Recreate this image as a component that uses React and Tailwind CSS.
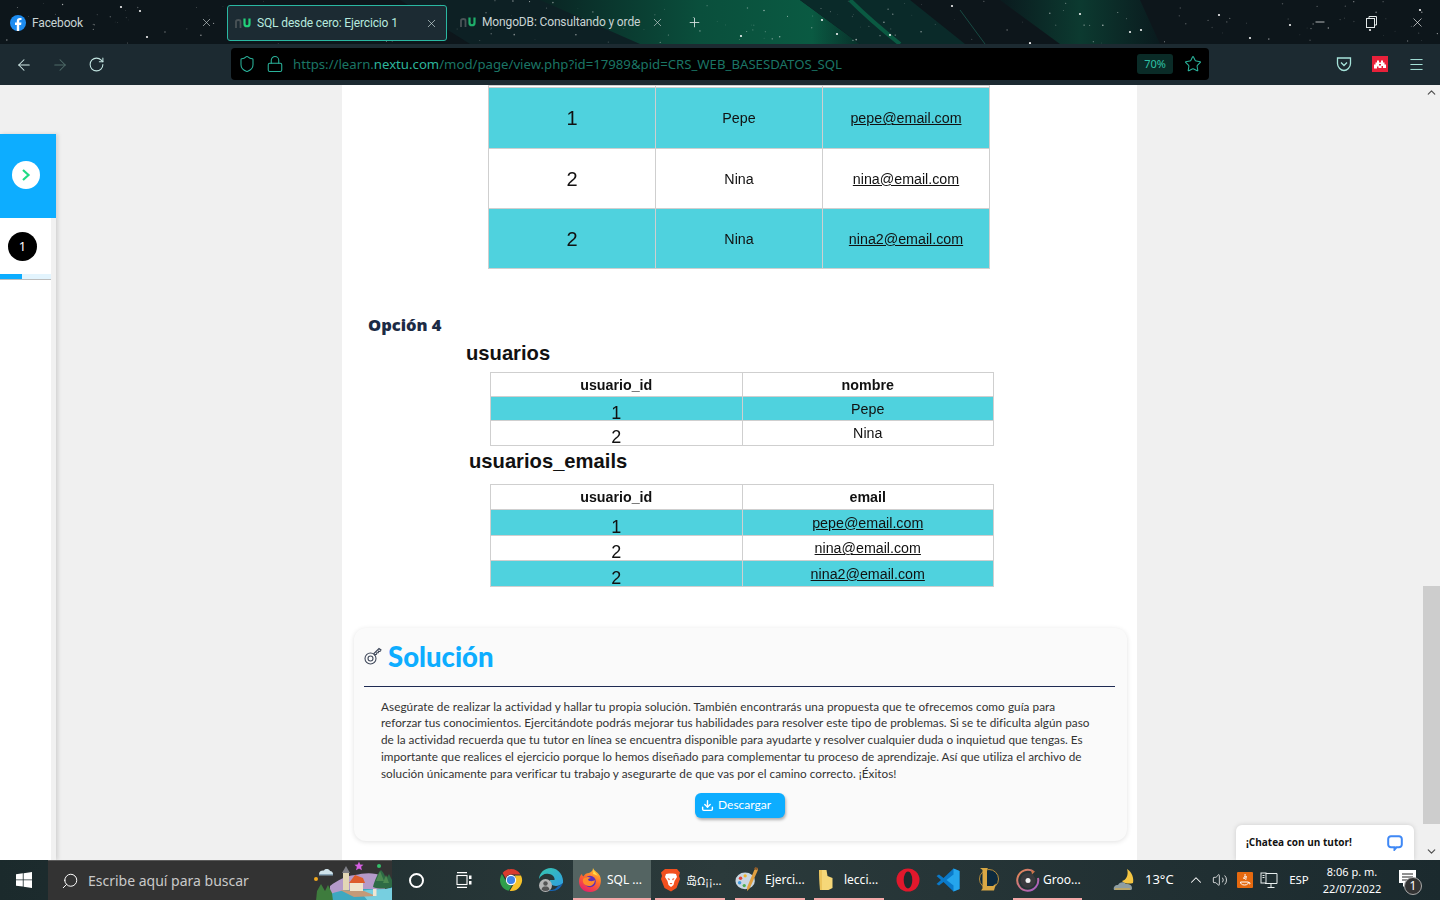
import React from "react";
import { ArrowLeft, ArrowRight, RotateCw, Shield, Lock, Star, Menu, X, Plus, Minus, Search, ChevronUp, ChevronDown, Volume2, Download } from "lucide-react";

const rnd = (i, s) => { const v = Math.sin(i * 12.9898 + s * 78.233) * 43758.5453; return v - Math.floor(v); };
const stars = Array.from({ length: 170 }, (_, i) => ({ x: rnd(i, 1) * 1440, y: rnd(i, 2) * 44, r: 0.3 + rnd(i, 3) * 0.5, o: 0.15 + rnd(i, 4) * 0.5 }));
const bright = [[121,7],[140,11],[147,37],[837,34],[1030,43],[1264,49],[1141,30],[952,6],[1219,15],[741,36],[822,20],[890,35],[1080,14],[1130,32],[1290,25],[1420,10],[1370,30],[1250,38]];

function TabsBackdrop() {
  return (
    <svg className="absolute inset-0" width="1440" height="44" viewBox="0 0 1440 44">
      <defs>
        <linearGradient id="bandA" x1="0" x2="1" y1="0" y2="0">
          <stop offset="0" stopColor="#0a2423" />
          <stop offset="0.5" stopColor="#0a4f3c" />
          <stop offset="0.85" stopColor="#0a5a42" />
          <stop offset="1" stopColor="#08302a" />
        </linearGradient>
        <linearGradient id="bandB" x1="0" x2="1" y1="0" y2="0">
          <stop offset="0" stopColor="#0a1a1e" />
          <stop offset="0.5" stopColor="#0c3a30" />
          <stop offset="1" stopColor="#0a1a1e" />
        </linearGradient>
      </defs>
      <rect width="1440" height="44" fill="#0d161b" />
      <polygon points="400,0 620,0 720,44 470,44" fill="#0d2024" />
      <polygon points="540,0 800,0 860,44 640,44" fill="url(#bandA)" />
      <polygon points="800,0 910,0 965,44 860,44" fill="#0a2a29" />
      <polygon points="1000,0 1140,0 1160,44 1060,44" fill="url(#bandB)" />
      <path d="M850 0 C870 20 885 32 900 44" stroke="#0a5a42" strokeWidth="4" fill="none" />
      <path d="M960 10 L985 44" stroke="#184a43" strokeWidth="1" fill="none" />
      {stars.map((s, i) => <circle key={i} cx={s.x} cy={s.y} r={s.r} fill="#fff" opacity={s.o} />)}
      {bright.map(([x, y], i) => <circle key={i} cx={x} cy={y} r="1.1" fill="#fff" opacity="0.95" />)}
    </svg>
  );
}

const FacebookIcon = () => (
  <svg width="16" height="16" viewBox="0 0 16 16">
    <circle cx="8" cy="8" r="8" fill="#1d8cf0" />
    <path d="M9.2 16V9.9h1.9l.35-2.3H9.2V6.2c0-.7.3-1.1 1.2-1.1h1.1V3.1c-.5-.1-1.1-.15-1.7-.15-1.8 0-3 1.1-3 3v1.65H5v2.3h1.8V16z" fill="#fff" />
  </svg>
);

const NuLogo = ({ dim }) => (
  <svg width="16" height="12" viewBox="0 0 16 12" fill="none">
    <path d="M1 11V4.5C1 2.5 5.5 2.5 5.5 4.5V11" stroke="#4a5357" strokeWidth="1.8" />
    <path d="M9.5 1.5V7C9.5 10 14.5 10 14.5 7V1.5" stroke={dim ? "#1fae6a" : "#22d07a"} strokeWidth="2.2" />
  </svg>
);

const ChromeIcon = () => (
  <svg width="24" height="24" viewBox="0 0 24 24">
    <path d="M12 1a11 11 0 0 1 9.5 5.5H12a5.5 5.5 0 0 0-5.2 3.7L3.6 4.9A11 11 0 0 1 12 1z" fill="#d93b2f" />
    <path d="M2.9 5.9 7.8 14.4A5.5 5.5 0 0 0 12.9 17.4L9.7 22.8A11 11 0 0 1 2.9 5.9z" fill="#2f9e4b" />
    <path d="M22 7.4A11 11 0 0 1 10.7 23l4.8-8.2A5.5 5.5 0 0 0 15.6 7.4z" fill="#f6c22a" />
    <circle cx="12" cy="12" r="5.2" fill="#fff" />
    <circle cx="12" cy="12" r="4.1" fill="#3f83e8" />
  </svg>
);

const EdgeIcon = () => (
  <svg width="26" height="26" viewBox="0 0 26 26">
    <defs>
      <linearGradient id="edgeA" x1="0" y1="0" x2="1" y2="1"><stop offset="0" stopColor="#36c6b0" /><stop offset="1" stopColor="#2f9fe0" /></linearGradient>
    </defs>
    <path d="M13 1C6 1 1.500 6 1 12c2-4 6-6 10-5 4 .6 6 3.500 5.500 6H12c-.5 3 2 6 6 6 2.500 0 5-1 7-3 1-6-4-15-12-15z" fill="url(#edgeA)" />
    <path d="M25 16c-2 5-6 8-11 8-2 0-3-.5-4-1 2 0 7 .5 9-3 1-1 4-2 6-4z" fill="#1565b5" />
    <circle cx="7.500" cy="18.500" r="6.500" fill="#b5b5b5" />
    <circle cx="7.500" cy="16.500" r="2.200" fill="#555" />
    <path d="M3.500 22.500c.5-2.500 2-3 4-3s3.500.5 4 3a6 6 0 0 1-8 0z" fill="#555" />
  </svg>
);

const FirefoxIcon = () => (
  <svg width="24" height="26" viewBox="0 0 24 26">
    <defs>
      <linearGradient id="ffA" x1="0.7" y1="0" x2="0.2" y2="1"><stop offset="0" stopColor="#ffc42f" /><stop offset="0.45" stopColor="#ff6a2c" /><stop offset="1" stopColor="#e5196f" /></linearGradient>
    </defs>
    <path d="M15 1c1 3 5 4 7 8 2.500 6 0 16-10 16C5 25 1 20 1 14.500 1 11 2.500 8 4 7c0 1 .5 2 1.500 2.500C6.500 7 9 6 11 6c2-1 4-2 4-5z" fill="url(#ffA)" />
    <circle cx="12" cy="14.500" r="5.800" fill="#5d2fb6" />
    <path d="M5 12c2-2 5-3 8-1-2 0-3 1-3 2 2 2 6 1 7 0-.5 4-3 6-6 6-4 0-7-3-6-7z" fill="#ff8a2a" />
    <path d="M15 1c0 3 3 5 5 8-1.500-1-4-2-5-2 1-2 0-4 0-6z" fill="#ffe04a" />
  </svg>
);

const BraveIcon = () => (
  <svg width="20" height="24" viewBox="0 0 20 24">
    <path d="M4 1h12l3 3.500-1 3.500 1 3-3.500 9L10 23.500 3.500 20 0 11l1-3-1-3.500z" fill="#f2501f" />
    <path d="M5 6l3-.5h4l3 .5 1 3-2.500 4-1 4L10 19l-2.500-2-1-4L4 9z" fill="#fff" />
    <path d="M6.500 10l2.500 1-1 1.500zM13.500 10L11 11l1 1.500zM8.500 15h3L10 16.500z" fill="#f2501f" />
  </svg>
);

const PaintIcon = () => (
  <svg width="26" height="28" viewBox="0 0 26 28">
    <ellipse cx="11" cy="15" rx="10.500" ry="9" fill="#c9d7e2" />
    <circle cx="6" cy="12" r="1.900" fill="#e0433a" />
    <circle cx="11" cy="9.500" r="1.800" fill="#f0b429" />
    <circle cx="5" cy="17" r="1.900" fill="#3f9ae0" />
    <circle cx="10" cy="20" r="1.800" fill="#4cae4f" />
    <path d="M24 1c1 .5 1 2 .5 3L16 23l-3 3 .2-4.500L21 3z" fill="#e0a040" />
    <path d="M20.500 2l3.500 1.500 1-2.500-3-1z" fill="#8b5a2b" />
  </svg>
);

const FolderDoc = () => (
  <svg width="16" height="22" viewBox="0 0 16 22">
    <path d="M1 1h7.500l1 6 5 2v10l-4 2H2z" fill="#f6d778" />
    <path d="M1 1h3v20H2z" fill="#ecc45c" />
  </svg>
);

const OperaIcon = () => (
  <svg width="24" height="24" viewBox="0 0 24 24">
    <circle cx="12" cy="12" r="11.500" fill="#e0182c" />
    <ellipse cx="12" cy="12" rx="4.300" ry="8.500" fill="#1c2b2e" />
  </svg>
);

const VSCodeIcon = () => (
  <svg width="24" height="24" viewBox="0 0 24 24">
    <path d="M17.500 0.500 7.500 10 3 6.500 0.500 8 5 12 0.500 16 3 17.500 7.500 14l10 9.500 6-2.500V3z" fill="#0a79c9" />
    <path d="M17.500 0.500 23.500 3v18l-6 2.500V0.500zM17.500 6.500 10.500 12l7 5.500z" fill="#25a5ec" fillRule="evenodd" />
  </svg>
);

const LolIcon = () => (
  <svg width="22" height="26" viewBox="0 0 22 26">
    <circle cx="12" cy="12" r="9.500" fill="#0c2a3e" stroke="#b78d3a" strokeWidth="1" />
    <path d="M3 1h8l-1 1.500V19h6l3-2.500-2 7H4l1.500-2V3z" fill="#d9a844" />
  </svg>
);

const GrooveIcon = () => (
  <svg width="24" height="24" viewBox="0 0 24 24">
    <defs>
      <linearGradient id="grA" x1="0" y1="0" x2="1" y2="1"><stop offset="0" stopColor="#e8894a" /><stop offset="1" stopColor="#a45ad0" /></linearGradient>
    </defs>
    <path d="M17 3.200A10.500 10.500 0 1 0 22 10" fill="none" stroke="url(#grA)" strokeWidth="2" />
    <circle cx="12" cy="12.500" r="7.500" fill="#3a3a3e" />
    <circle cx="12" cy="12.500" r="2.500" fill="#f2f2f2" />
    <path d="M15 1.500l4 2-3 3z" fill="#c9744a" />
  </svg>
);

const WindowsIcon = () => (
  <svg width="16" height="16" viewBox="0 0 16 16">
    <path d="M0 2.300 6.800 1.300V7.500H0zM7.600 1.200 16 0V7.500H7.600zM0 8.300H6.800V14.600L0 13.700zM7.600 8.300H16V16L7.600 14.800z" fill="#fff" />
  </svg>
);

const TaskViewIcon = () => (
  <svg width="16" height="16" viewBox="0 0 16 16" fill="none" stroke="#fff" strokeWidth="1.100">
    <path d="M1 .6H11M1 15.400H11" />
    <rect x="1" y="3.500" width="10" height="9" />
    <rect x="13" y="3.500" width="2.500" height="3.500" fill="#fff" stroke="none" />
    <rect x="13" y="9" width="2.500" height="3.500" fill="#fff" stroke="none" />
  </svg>
);

const Scenery = () => (
  <svg className="absolute right-0 top-0" width="80" height="40" viewBox="312 860 80 40">
    <path d="M330 885c8-6 15-10 25-11 8-1 16-4 30 2v24h-55z" fill="#b59ac9" />
    <path d="M318 900c12-10 30-12 48-12 8 0 18 2 26-2v14z" fill="#3ea8c0" />
    <path d="M360 890c10-2 22-1 32-3v13h-24z" fill="#77cfe0" />
    <path d="M373 886c2-8 5-14 8-17 3 3 4 6 5 9l3-5 3 6v7c-6 2-14 2-19 0z" fill="#2e6b45" />
    <path d="M376 880l4-10 4 10zM383 882l3-8 3 8z" fill="#4c8a52" />
    <path d="M316 900l1-10 4-7 4 7 3-6 4 8 1 8z" fill="#3e7c3d" />
    <path d="M340 889l24 1 12 5-22 1z" fill="#c49a78" />
    <rect x="343" y="871" width="6" height="18" fill="#e3d6b5" />
    <path d="M342 872l4-7 4 7z" fill="#7f7f86" />
    <rect x="350" y="881" width="13" height="9" fill="#f0e4cb" />
    <path d="M349 882l6-8 8 3 2 5z" fill="#dd5c2a" />
    <rect x="373" y="888" width="3.500" height="7" fill="#efe6d2" />
    <path d="M319 873c0-3 3-4 5-3.500 1-2 5-2 6 .5 2 0 3 1.500 3 3z" fill="#cfe3ea" />
    <path d="M319 873h14v1.500h-14z" fill="#8aa6b8" />
    <path d="M359 860.500l1.200 3 3.300.3-2.400 2 .8 3.400-2.900-1.800-3 1.800.9-3.400-2.500-2 3.300-.3z" fill="#d65fe2" />
    <circle cx="379" cy="865" r="2" fill="#35c06a" />
    <circle cx="316" cy="878" r="2" fill="#f2a81d" />
  </svg>
);

const WeatherIcon = () => (
  <svg width="24" height="24" viewBox="0 0 24 24">
    <path d="M15 1c5 3 7 9 6 14-3 1-9 1-11-2 4-.5 7-6 5-12z" fill="#f4c542" />
    <path d="M2 22c-1-3 1-5 4-5 1-3 6-4 8-1 3-.5 6 1 6 4 0 1-.5 2-1 2z" fill="#8e9da1" />
    <path d="M3 22h15c.5-1 0-1.500-.5-2H3z" fill="#b8a56a" />
  </svg>
);

const TrayFire = () => (
  <svg width="16" height="16" viewBox="0 0 16 16">
    <rect width="16" height="16" rx="1" fill="#e5690f" />
    <path d="M8 2c1 2-2 3-1 5 .5-1 2-2 2-3 1 2-1 3 0 4M3.500 10h8c0 1.500-1 3-4 3s-4-1.500-4-3zM12 10.500c1.500 0 1.500 1.500 0 1.500" stroke="#fff" strokeWidth="1" fill="none" />
  </svg>
);

const NetIcon = () => (
  <svg width="18" height="17" viewBox="0 0 18 17" fill="none" stroke="#e8eeee" strokeWidth="1">
    <path d="M5 1.500H17V11.500H5" />
    <rect x="1" y="1" width="5" height="10" fill="#1c2b2e" />
    <path d="M2.500 3.500H4.500M2.500 5.500H4.500M11 11.500V15M7.500 15.500H14.500" />
  </svg>
);

const NotifIcon = () => (
  <div className="relative w-[32px] h-[28px]">
    <svg className="absolute left-[2px] top-[1px]" width="17" height="18" viewBox="0 0 17 18">
      <path d="M0 0H17V13H8L4 17V13H0z" fill="#fff" />
      <path d="M3 4H14M3 7H14M3 10H11" stroke="#222" strokeWidth="1" />
    </svg>
    <div className="absolute left-[7px] top-[8px] w-[18px] h-[18px] rounded-full bg-[#333] border border-[#aaa] text-white text-[12px] leading-[16px] text-center font-['Noto_Sans',sans-serif]">1</div>
  </div>
);

const KeyIcon = () => (
  <svg width="18" height="18" viewBox="0 0 18 18" fill="none" stroke="#414a5c" strokeWidth="1.100">
    <circle cx="6.500" cy="11.500" r="5.500" />
    <circle cx="6.500" cy="11.500" r="2.500" />
    <path d="M9.500 7l5.500-5.500 2 1.500-1 1.500-1.500-.3-.2 1.500-1.500.1-.3 1.500-1.500.3-.5 1" />
  </svg>
);

const PocketIcon = () => (
  <svg width="16" height="16" viewBox="0 0 16 16" fill="none" stroke="#a6e4da" strokeWidth="1.300">
    <path d="M1.500 2H14.500V7.500C14.500 11.500 11 14.500 8 14.500S1.500 11.500 1.500 7.500z" />
    <path d="M5 6.500 8 9.500 11 6.500" />
  </svg>
);

const MosaicIcon = () => (
  <svg width="16" height="16" viewBox="0 0 16 16">
    <rect width="16" height="16" fill="#e8213a" />
    <path d="M5 4.500h2v2h2v-2h2v2h1.500v2H14v3.500h-3v-2H9.500V12h-3v-1.500H5v2H2V8.500h1.500v-2H5z" fill="#fff" />
    <path d="M7 8h2v1.500H7z" fill="#e8213a" />
  </svg>
);

const ChatBubble = () => (
  <svg width="16" height="16" viewBox="0 0 16 16" fill="none" stroke="#3f88f5" strokeWidth="2">
    <path d="M4 1.200H12C13.500 1.200 14.800 2.500 14.800 4V9.500C14.800 11 13.500 12.300 12 12.300H9.500L7.500 14.600V12.300H4C2.500 12.300 1.200 11 1.200 9.500V4C1.200 2.500 2.500 1.200 4 1.200z" />
  </svg>
);

const teal = "bg-[#4fd2de]";
const cell = "border border-[#cfcfcf] text-center p-0 align-middle";

function SmallTable({ col2, rows, heights }) {
  return (
    <table className="w-[504px] table-fixed border-collapse font-['Liberation_Sans',sans-serif] text-[#111] blur-[0.3px]">
      <tbody>
        <tr style={{ height: heights[0] }}>
          <th className={`${cell} text-[14.25px] font-bold`}><span className="inline-block translate-y-[1px]">usuario_id</span></th>
          <th className={`${cell} text-[14.25px] font-bold`}><span className="inline-block translate-y-[1px]">{col2}</span></th>
        </tr>
        {rows.map((r, i) => (
          <tr key={i} style={{ height: heights[i + 1] }} className={i % 2 === 0 ? teal : "bg-white"}>
            <td className={`${cell} text-[18px] leading-none`}><span className="inline-block translate-y-[4px]">{r[0]}</span></td>
            <td className={`${cell} text-[14.25px]`}><span className={`inline-block translate-y-[1px] ${r[1].includes("@") ? "underline" : ""}`}>{r[1]}</span></td>
          </tr>
        ))}
      </tbody>
    </table>
  );
}

function TaskApp({ w, slot, icon, label, active, under, shift, gap, glyph }) {
  return (
    <div style={{ width: w, marginLeft: gap }} className={`h-[40px] flex items-center relative shrink-0 ${active ? "bg-[#546462]" : ""}`}>
      <div style={{ width: slot, paddingRight: shift }} className="flex justify-center items-center shrink-0">{icon}</div>
      <span className={`text-white whitespace-nowrap ${glyph ? "text-[11px] font-['Noto_Sans_CJK_SC','Noto_Sans',sans-serif]" : "text-[12px]"}`}>{label}</span>
      {under && <div className="absolute left-0 right-0 bottom-0 h-[2px] bg-[#f3a8a8]" />}
    </div>
  );
}

const Slot = ({ w, ml, children }) => <div style={{ width: w, marginLeft: ml }} className="h-[40px] flex items-center justify-center shrink-0">{children}</div>;

export default function App() {
  return (
    <div className="w-[1440px] h-[900px] overflow-hidden flex flex-col bg-[#f0f0f0] font-['Noto_Sans',sans-serif]">
      {/* tab strip */}
      <div className="relative h-[44px] shrink-0 bg-[#0c1419]">
        <TabsBackdrop />
        <div className="relative flex items-center h-full text-[12px] tracking-[-0.14px] text-[#c9d4d4] font-['Roboto',sans-serif]">
          <div className="w-[220px] ml-[7px] pl-[3px] h-[35px] mt-[1px] flex items-center shrink-0">
            <FacebookIcon />
            <span className="ml-[6px]">Facebook</span>
            <X size={13} strokeWidth={1.2} className="ml-auto mr-[14px]" />
          </div>
          <div className="w-[220px] h-[36px] mt-[2px] rounded-[3px] border border-[#2ab8a2] bg-[#1c2b33] flex items-center pl-[7px] shrink-0 text-[#b7eadf]">
            <NuLogo />
            <span className="ml-[6px] whitespace-nowrap">SQL desde cero: Ejercicio 1</span>
            <X size={13} strokeWidth={1.2} className="ml-auto mr-[8px] text-[#d5e5e5]" />
          </div>
          <div className="w-[220px] h-[35px] flex items-center pl-[13px] shrink-0">
            <NuLogo dim />
            <span className="ml-[6px] w-[168px] whitespace-nowrap">MongoDB: Consultando y orde</span>
            <X size={13} strokeWidth={1.2} className="ml-[1px]" />
          </div>
          <Plus size={15} strokeWidth={1.4} className="ml-[20px] text-[#d8e2e2]" />
          <div className="ml-auto flex items-center text-white">
            <Minus size={14} strokeWidth={1.2} className="mr-[39px]" />
            <svg width="11" height="12" viewBox="0 0 11 12" fill="none" stroke="#e2e8e8" className="mr-[33px]"><rect x="0.500" y="2.500" width="8" height="9" /><path d="M3 2.500V.5H10.500V9H8.500" /></svg>
            <X size={15} strokeWidth={1} className="mr-[15px]" />
          </div>
        </div>
      </div>

      {/* toolbar */}
      <div className="h-[41px] shrink-0 bg-[#1c2a31] flex items-center">
        <Slot w={48}><ArrowLeft size={18} strokeWidth={1.4} className="text-[#d3ecea]" /></Slot>
        <Slot w={24}><ArrowRight size={18} strokeWidth={1.4} className="text-[#4f6b69]" /></Slot>
        <Slot w={48}><RotateCw size={17} strokeWidth={1.5} className="text-[#c3e6e2]" /></Slot>
        <div className="ml-[111px] w-[978px] h-[32px] bg-black rounded-[4px] flex items-center text-[13.2px] text-[#1b7565] mb-[1px]">
          <Shield size={18} strokeWidth={1.4} className="ml-[7px] text-[#2ab39b]" />
          <Lock size={18} strokeWidth={1.4} className="ml-[10px] text-[#2ab39b]" />
          <span className="ml-[9px] mt-[1px] whitespace-nowrap">https://learn.<span className="text-[#2db59c]">nextu.com</span>/mod/page/view.php?id=17989&amp;pid=CRS_WEB_BASESDATOS_SQL</span>
          <div className="ml-auto w-[36px] h-[20px] rounded-[3px] bg-[#0a2b27] text-[#2fc2a6] text-[11px] flex items-center justify-center">70%</div>
          <Star size={18} strokeWidth={1.4} className="ml-[11px] mr-[7px] text-[#2ab39b]" />
        </div>
        <div className="ml-auto flex items-center mb-[1px]">
          <Slot w={36}><PocketIcon /></Slot>
          <Slot w={36}><MosaicIcon /></Slot>
          <Slot w={36}><Menu size={17} strokeWidth={1.4} className="text-[#a6e4da]" /></Slot>
          <div className="w-[6px]" />
        </div>
      </div>

      {/* page */}
      <div className="relative flex-1 flex min-h-0 overflow-hidden">
        <div className="w-[342px] shrink-0 pt-[49px]">
          <div className="w-[56px] h-full flex flex-col shadow-[2px_0_4px_rgba(0,0,0,0.13)]">
            <div className="h-[84px] bg-[#0dadff] shrink-0 flex items-center justify-center">
              <div className="w-[28px] h-[28px] rounded-full bg-white flex items-center justify-center mr-[4px] mb-[2px]">
                <svg width="10" height="14" viewBox="0 0 10 14" fill="none" stroke="#1fdc83" strokeWidth="2.200"><path d="M2 2 7.500 7 2 12" /></svg>
              </div>
            </div>
            <div className="flex flex-1">
              <div className="w-[51px] bg-white">
                <div className="w-[29px] h-[29px] rounded-full bg-black text-white text-[13px] ml-[8px] mt-[14px] flex items-center justify-center">1</div>
                <div className="mt-[13px] h-[6px] bg-[#e3f4fd] border-b border-[#bdbdbd]">
                  <div className="w-[22px] h-[5px] bg-[#0dadff]" />
                </div>
              </div>
              <div className="w-[5px] bg-[#f1f1f1]" />
            </div>
          </div>
        </div>

        <main className="w-[795px] shrink-0 bg-white">
          <table className="ml-[146px] w-[502px] table-fixed border-collapse font-['Liberation_Sans',sans-serif] text-[#111] blur-[0.3px]">
            <tbody>
              <tr className="h-[2px] bg-white"><td className={cell} /><td className={cell} /><td className={cell} /></tr>
              {[["1", "Pepe", "pepe@email.com", 61, teal], ["2", "Nina", "nina@email.com", 60, "bg-white"], ["2", "Nina", "nina2@email.com", 60, teal]].map((r, i) => (
                <tr key={i} style={{ height: r[3] }} className={r[4]}>
                  <td className={`${cell} text-[20px]`}>{r[0]}</td>
                  <td className={`${cell} text-[14.25px]`}><span className="inline-block translate-y-[1px]">{r[1]}</span></td>
                  <td className={`${cell} text-[14.25px]`}><span className="inline-block translate-y-[1px] underline">{r[2]}</span></td>
                </tr>
              ))}
            </tbody>
          </table>

          <h3 className="mt-[44px] ml-[26px] text-[16.5px] leading-[24px] font-extrabold text-[#1c2b45] font-['Open_Sans',sans-serif]">Opción 4</h3>
          <h4 className="mt-[3px] ml-[124px] text-[20.2px] leading-[26px] font-bold text-[#111] font-['Liberation_Sans',sans-serif]">usuarios</h4>
          <div className="mt-[6px] ml-[148px]">
            <SmallTable col2="nombre" heights={[24, 24, 25]} rows={[["1", "Pepe"], ["2", "Nina"]]} />
          </div>
          <h4 className="mt-[2px] ml-[127px] text-[20.2px] leading-[26px] font-bold text-[#111] font-['Liberation_Sans',sans-serif]">usuarios_emails</h4>
          <div className="mt-[10px] ml-[148px]">
            <SmallTable col2="email" heights={[25, 26, 25, 26]} rows={[["1", "pepe@email.com"], ["2", "nina@email.com"], ["2", "nina2@email.com"]]} />
          </div>

          <section className="mt-[41px] ml-[12px] w-[773px] h-[213px] bg-[#fafafa] rounded-[12px] shadow-[0_1px_5px_rgba(0,0,0,0.12)] pt-[11px] font-['Lato',sans-serif]">
            <div className="ml-[10px] flex items-center h-[34px]">
              <KeyIcon />
              <h2 className="ml-[6px] mt-[1px] text-[27.5px] leading-[34px] font-black text-[#0dadff]">Solución</h2>
            </div>
            <div className="mt-[13px] ml-[10px] w-[751px] h-px bg-[#1e2a52]" />
            <p className="mt-[11.5px] ml-[27px] text-[11.75px] leading-[16.75px] text-[#333] whitespace-nowrap">
              <span className="block tracking-[0.06px]">Asegúrate de realizar la actividad y hallar tu propia solución. También encontrarás una propuesta que te ofrecemos como guía para</span>
              <span className="block tracking-[0.02px]">reforzar tus conocimientos. Ejercitándote podrás mejorar tus habilidades para resolver este tipo de problemas. Si se te dificulta algún paso</span>
              <span className="block tracking-[0.03px]">de la actividad recuerda que tu tutor en línea se encuentra disponible para ayudarte y resolver cualquier duda o inquietud que tengas. Es</span>
              <span className="block tracking-[0.006px]">importante que realices el ejercicio porque lo hemos diseñado para complementar tu proceso de aprendizaje. Así que utiliza el archivo de</span>
              <span className="block tracking-[0.013px]">solución únicamente para verificar tu trabajo y asegurarte de que vas por el camino correcto. ¡Éxitos!</span>
            </p>
            <button className="mt-[10.5px] ml-[341px] w-[90px] h-[25px] rounded-[6px] bg-[#0dadff] text-white text-[12px] shadow-[1px_2px_3px_rgba(0,0,0,0.3)] flex items-center pl-[6px]">
              <Download size={13} strokeWidth={2.6} className="mr-[4px]" />Descargar
            </button>
          </section>
        </main>

        <div className="flex-1 flex justify-end">
          <div className="w-[17px] flex flex-col items-center text-[#505050]">
            <div className="h-[15px] flex items-center"><ChevronUp size={13} strokeWidth={2.2} /></div>
            <div className="mt-[486px] w-full h-[238px] bg-[#cdcdcd]" />
            <div className="mt-auto h-[18px] flex items-center"><ChevronDown size={13} strokeWidth={2.2} /></div>
          </div>
        </div>

        <div className="absolute right-[26px] bottom-0 w-[178px] h-[35px] bg-white rounded-t-[6px] shadow-[0_0_5px_rgba(0,0,0,0.15)] flex items-center pl-[10px] pr-[11px]">
          <span className="text-[10px] font-bold text-[#111] font-['Open_Sans',sans-serif] whitespace-nowrap">¡Chatea con un tutor!</span>
          <div className="ml-auto"><ChatBubble /></div>
        </div>
      </div>

      {/* taskbar */}
      <div className="h-[40px] shrink-0 flex items-center bg-[#1f2f32] bg-gradient-to-r from-[#1b2a2c] via-[#2b3a3b] to-[#1b2a2e] font-['Noto_Sans',sans-serif]">
        <Slot w={48}><WindowsIcon /></Slot>
        <div className="relative w-[344px] h-[40px] bg-[#333333] border-t border-[#5a5a5a] flex items-center shrink-0 overflow-hidden">
          <Search size={18} strokeWidth={1.3} className="ml-[13px] text-white -scale-x-100" />
          <span className="ml-[9px] text-[14px] text-[#c9c9c9] whitespace-nowrap">Escribe aquí para buscar</span>
          <Scenery />
        </div>
        <Slot w={48}><div className="w-[15px] h-[15px] rounded-full border-2 border-white" /></Slot>
        <Slot w={47}><TaskViewIcon /></Slot>
        <Slot w={48}><ChromeIcon /></Slot>
        <Slot w={32}><EdgeIcon /></Slot>
        <TaskApp gap={6} w={78} slot={34} icon={<FirefoxIcon />} label="SQL ..." active under />
        <TaskApp gap={4} w={70} slot={31} icon={<BraveIcon />} label="岛Ω¡¡..." under glyph />
        <TaskApp gap={10} w={70} slot={30} shift={6} icon={<PaintIcon />} label="Ejerci..." under />
        <TaskApp gap={9} w={70} slot={30} shift={6} icon={<FolderDoc />} label="lecci..." under />
        <Slot w={40} ml={4}><OperaIcon /></Slot>
        <Slot w={40}><VSCodeIcon /></Slot>
        <Slot w={40}><LolIcon /></Slot>
        <TaskApp gap={5} w={69} slot={30} icon={<GrooveIcon />} label="Groo..." under />
        <Slot w={30} ml={27}><WeatherIcon /></Slot>
        <span className="ml-[6px] w-[36px] text-white text-[13px] whitespace-nowrap">13°C</span>
        <Slot w={24} ml={3}><ChevronUp size={18} strokeWidth={1.4} className="text-white" /></Slot>
        <Slot w={24}><Volume2 size={16} strokeWidth={1.2} className="text-white" /></Slot>
        <Slot w={26}><TrayFire /></Slot>
        <Slot w={22}><NetIcon /></Slot>
        <Slot w={36} ml={1}><span className="text-white text-[11.5px]">ESP</span></Slot>
        <div className="w-[74px] ml-[-2px] text-center text-white text-[11px] leading-[17px] shrink-0">
          <div>8:06 p. m.</div>
          <div>22/07/2022</div>
        </div>
        <div className="ml-[8px] pt-[5px]"><NotifIcon /></div>
      </div>
    </div>
  );
}
